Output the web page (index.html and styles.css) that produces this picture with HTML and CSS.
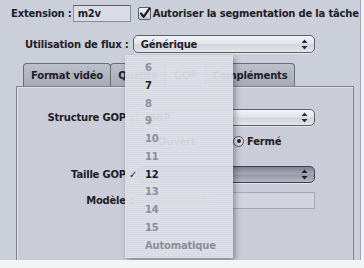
FILE: index.html
```html
<!DOCTYPE html>
<html lang="fr">
<head>
<meta charset="utf-8">
<link rel="stylesheet" href="styles.css">
</head>
<body>
<div class="window">
  <div class="row r1">
    <span class="lbl">Extension :</span>
    <span class="field ext">m2v</span>
    <span class="check"><svg width="13" height="13" viewBox="0 0 13 13"><defs><linearGradient id="cg" x1="0" y1="0" x2="0" y2="1"><stop offset="0" stop-color="#f4f5f8"/><stop offset="1" stop-color="#c3c6d0"/></linearGradient></defs><rect x="0.5" y="0.5" width="12" height="12" rx="1.5" fill="url(#cg)" stroke="#5a5d66"/><path d="M3 6.5 L5.6 9.8 L11.5 1.5" fill="none" stroke="#1d1f26" stroke-width="2.2" stroke-linecap="round" stroke-linejoin="round"/></svg></span>
    <span class="lbl chklbl">Autoriser la segmentation de la tâche</span>
  </div>
  <div class="row r2">
    <span class="lbl">Utilisation de flux :</span>
    <div class="popup flux"><span class="ptext">Générique</span><svg class="arrows" width="7" height="11" viewBox="0 0 7 11"><path d="M3.5 0.5 L6.5 4 L0.5 4 Z M3.5 10.5 L6.5 7 L0.5 7 Z" fill="#2a2c33"/></svg></div>
  </div>
  <div class="tabs">
    <div class="tab t1">Format vidéo</div>
    <div class="tab t2">Qualité</div>
    <div class="tab t3 sel">GOP</div>
    <div class="tab t4">Compléments</div>
  </div>
  <div class="panel">
    <div class="frow f1">
      <span class="flabel">Structure GOP :</span>
      <div class="popup ctl"><span class="ptext">IBBP</span><svg class="arrows" width="7" height="11" viewBox="0 0 7 11"><path d="M3.5 0.5 L6.5 4 L0.5 4 Z M3.5 10.5 L6.5 7 L0.5 7 Z" fill="#2a2c33"/></svg></div>
    </div>
    <div class="frow f2">
      <span class="flabel"></span>
      <div class="radios">
        <span class="radio"><span class="dot"></span>Ouvert</span>
        <span class="radio on"><span class="dot"></span>Fermé</span>
      </div>
    </div>
    <div class="frow f3">
      <span class="flabel">Taille GOP :</span>
      <div class="popup ctl pressed"><span class="ptext">12</span><svg class="arrows" width="7" height="11" viewBox="0 0 7 11"><path d="M3.5 0.5 L6.5 4 L0.5 4 Z M3.5 10.5 L6.5 7 L0.5 7 Z" fill="#1d1f26"/></svg></div>
    </div>
    <div class="frow f4">
      <span class="flabel">Modèle :</span>
      <span class="field model">IBBPBBPBBP</span>
    </div>
  </div>
  <div class="menu">
    <div class="item dis">6</div>
    <div class="item">7</div>
    <div class="item dis">8</div>
    <div class="item dis">9</div>
    <div class="item dis">10</div>
    <div class="item dis">11</div>
    <div class="item checked"><span class="tick">✓</span>12</div>
    <div class="item dis">13</div>
    <div class="item dis">14</div>
    <div class="item dis">15</div>
    <div class="item dis">Automatique</div>
  </div>
</div>
</body>
</html>
```
FILE: styles.css
```css
html, body {
  margin: 0;
  background: #f3f4f6;
}
body {
  font-family: "DejaVu Sans", "Liberation Sans", sans-serif;
  font-weight: bold;
  font-size: 10px;
  letter-spacing: -0.2px;
  color: #1e2027;
}
.window {
  position: relative;
  width: 361px;
  height: 260px;
  background: #cbcfda;
  overflow: hidden;
  border-right: 1px solid #a3a6b0;
  box-sizing: border-box;
}
.row {
  display: flex;
  align-items: center;
}
.r1 {
  height: 17px;
  padding: 5px 0 0 11px;
}
.field {
  display: block;
  box-sizing: border-box;
  border: 1px solid #8a8d97;
  border-top-color: #5c5f68;
  background: #d9dce4;
  line-height: 15px;
  padding-left: 4px;
}
.ext {
  width: 58px;
  height: 17px;
  margin-left: 1px;
}
.check {
  display: block;
  width: 13px;
  height: 13px;
  margin-left: 7px;
}
.check svg { display: block; }
.chklbl { margin-left: 2px; }
.r2 {
  margin-top: 13px;
  padding-left: 25px;
}
.popup {
  display: flex;
  align-items: center;
  justify-content: space-between;
  box-sizing: border-box;
  height: 18px;
  border: 1px solid #5d6069;
  border-radius: 5px;
  background: linear-gradient(#f2f3f6, #e2e4ea 45%, #d2d5dd 55%, #e4e6eb);
  padding: 0 6px 0 7px;
  box-shadow: 0 1px 0 rgba(255,255,255,0.5);
}
.flux {
  width: 182px;
  margin-left: 4px;
}
.arrows { display: block; }
.tabs {
  display: flex;
  margin-top: 10px;
  padding-left: 23px;
  height: 23px;
}
.tab {
  box-sizing: border-box;
  height: 23px;
  display: flex;
  align-items: center;
  justify-content: center;
  border: 1px solid #696c76;
  border-bottom: none;
  border-radius: 4px 4px 0 0;
  background: linear-gradient(#bcc0ca, #a6aab5);
  margin-right: -1px;
}
.tab.sel {
  background: linear-gradient(#e3e5eb, #cfd2db);
}
.t1 { width: 88px; }
.t2 { width: 56px; }
.t3 { width: 41px; }
.t4 { width: 90px; }
.panel {
  margin-left: 16px;
  width: 338px;
  height: 174px;
  box-sizing: border-box;
  border: 1px solid #7f838d;
  border-bottom: none;
  background: #cacdd8;
  box-shadow: inset 1px 1px 0 #dfe1e8;
  padding-top: 22px;
}
.frow {
  display: flex;
  align-items: center;
  height: 17px;
}
.flabel {
  width: 120px;
  flex: none;
  text-align: right;
  box-sizing: border-box;
  padding-right: 4px;
}
.ctl { width: 178px; height: 17px; }
.f2 { margin-top: 7px; height: 16px; }
.f3 { margin-top: 17px; }
.f4 { margin-top: 9px; }
.radios {
  display: flex;
  align-items: center;
  padding-left: 7px;
}
.radio {
  display: flex;
  align-items: center;
  width: 89px;
}
.dot {
  width: 11px;
  height: 11px;
  box-sizing: border-box;
  border: 1px solid #50535c;
  border-radius: 50%;
  background: radial-gradient(circle at 50% 35%, #f4f5f8, #c4c7d0);
  margin-right: 3px;
  position: relative;
}
.radio.on .dot::after {
  content: "";
  position: absolute;
  left: 2.5px;
  top: 2.5px;
  width: 4px;
  height: 4px;
  border-radius: 50%;
  background: #1d1f26;
}
.pressed {
  border-color: #3e414a;
  background: linear-gradient(#7d8191, #a3a7b5 45%, #959aa9 55%, #b4b8c4);
}
.model {
  width: 178px;
  height: 17px;
  background: #d1d4dd;
  border-color: #a5a8b2;
  color: #9ea2ad;
  padding-left: 8px;
}
.menu {
  position: absolute;
  left: 125px;
  top: 55px;
  width: 108px;
  height: 203px;
  box-sizing: border-box;
  padding: 4px 0;
  background:
    repeating-linear-gradient(to bottom, rgba(255,255,255,0.2) 0 1px, rgba(0,0,0,0) 1px 2px),
    rgba(214,217,226,0.95);
  box-shadow: 2px 3px 6px rgba(0,0,0,0.35);
}
.item {
  position: relative;
  height: 17.75px;
  line-height: 17.75px;
  padding-left: 20px;
  color: #1e2027;
  font-size: 10px;
}
.item.dis { color: #8a8e9a; }
.tick {
  position: absolute;
  left: 4px;
  top: 0;
  font-weight: normal;
}
```
